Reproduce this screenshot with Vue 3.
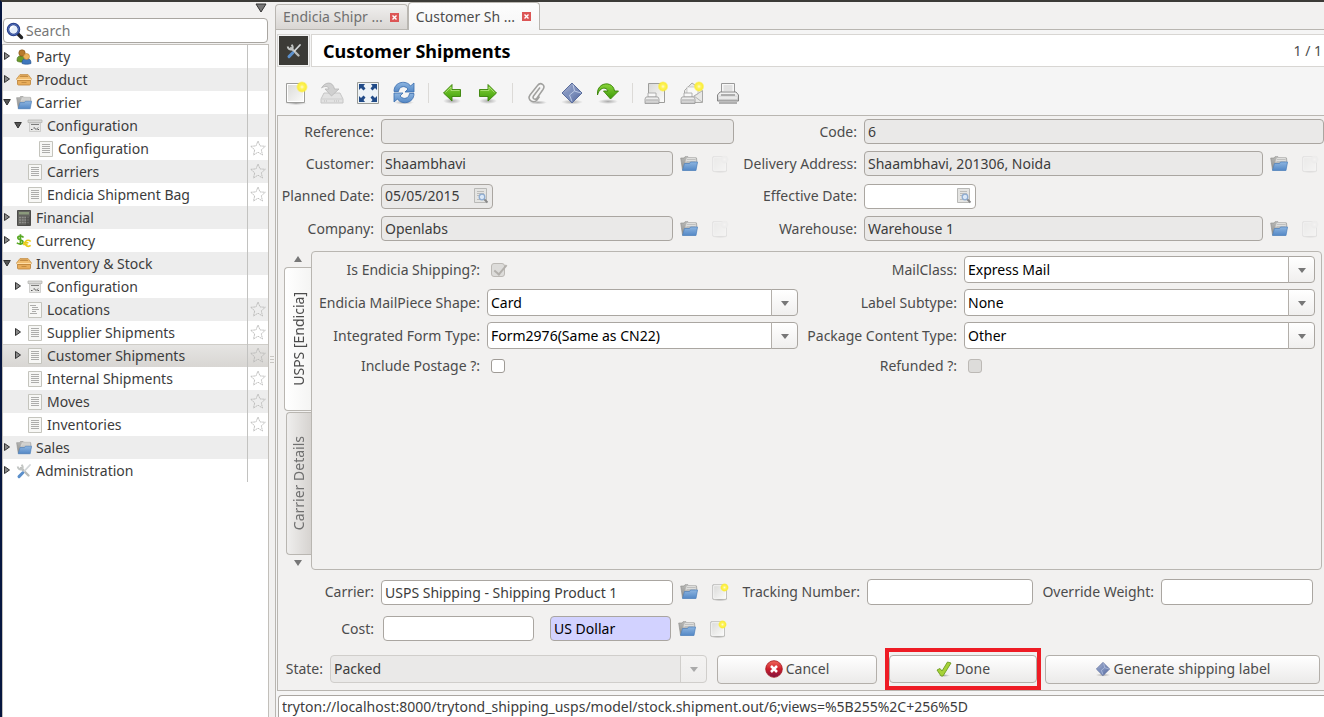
<script setup>
import { ref } from 'vue'

const search = ref('')
const tree = [
  { label: 'Party', icon: 'party', level: 0, state: 'closed' },
  { label: 'Product', icon: 'box', level: 0, state: 'closed' },
  { label: 'Carrier', icon: 'folder', level: 0, state: 'open' },
  { label: 'Configuration', icon: 'config', level: 1, state: 'open' },
  { label: 'Configuration', icon: 'list', level: 2, star: true },
  { label: 'Carriers', icon: 'list', level: 1, star: true },
  { label: 'Endicia Shipment Bag', icon: 'list', level: 1, star: true },
  { label: 'Financial', icon: 'calc', level: 0, state: 'closed' },
  { label: 'Currency', icon: 'currency', level: 0, state: 'closed' },
  { label: 'Inventory & Stock', icon: 'box', level: 0, state: 'open' },
  { label: 'Configuration', icon: 'config', level: 1, state: 'closed' },
  { label: 'Locations', icon: 'treelist', level: 1, star: true },
  { label: 'Supplier Shipments', icon: 'list', level: 1, state: 'closed', star: true },
  { label: 'Customer Shipments', icon: 'list', level: 1, state: 'closed', star: true, selected: true },
  { label: 'Internal Shipments', icon: 'list', level: 1, star: true },
  { label: 'Moves', icon: 'list', level: 1, star: true },
  { label: 'Inventories', icon: 'list', level: 1, star: true },
  { label: 'Sales', icon: 'folder', level: 0, state: 'closed' },
  { label: 'Administration', icon: 'tools', level: 0, state: 'closed' }
]
const tools = [
  [
    { icon: 'new', name: 'New' },
    { icon: 'save', name: 'Save', off: true },
    { icon: 'fullscreen', name: 'Switch view' },
    { icon: 'refresh', name: 'Reload' }
  ],
  [
    { icon: 'prev', name: 'Previous' },
    { icon: 'next', name: 'Next' }
  ],
  [
    { icon: 'clip', name: 'Attachment' },
    { icon: 'gem', name: 'Action' },
    { icon: 'relate', name: 'Relate' }
  ],
  [
    { icon: 'report', name: 'Report' },
    { icon: 'email', name: 'E-mail' },
    { icon: 'print', name: 'Print' }
  ]
]
</script>

<template>
  <div class="window">
    <svg class="defs" aria-hidden="true">
      <defs>
        <linearGradient id="gPaper" x1="0" y1="0" x2="1" y2="1"><stop offset="0" stop-color="#d9d9d7" /><stop offset="1" stop-color="#fcfcfb" /></linearGradient>
        <linearGradient id="gBlue" x1="0" y1="0" x2="0" y2="1"><stop offset="0" stop-color="#8db5e0" /><stop offset="1" stop-color="#5488c6" /></linearGradient>
        <linearGradient id="gSteel" x1="0" y1="0" x2="0" y2="1"><stop offset="0" stop-color="#b9b9b7" /><stop offset="1" stop-color="#8a8a88" /></linearGradient>
        <linearGradient id="gGreen" x1="0" y1="0" x2="0" y2="1"><stop offset="0" stop-color="#8ad53a" /><stop offset="1" stop-color="#3b9a07" /></linearGradient>
        <linearGradient id="gRed" x1="0" y1="0" x2="0" y2="1"><stop offset="0" stop-color="#ef6a5c" /><stop offset=".5" stop-color="#cf1f2b" /><stop offset="1" stop-color="#7e1240" /></linearGradient>
        <linearGradient id="gGem" x1="0" y1="0" x2="1" y2="1"><stop offset="0" stop-color="#a9b4d2" /><stop offset="1" stop-color="#5268a0" /></linearGradient>
        <linearGradient id="gGrey" x1="0" y1="0" x2="0" y2="1"><stop offset="0" stop-color="#fbfbfb" /><stop offset="1" stop-color="#c2c2c2" /></linearGradient>
        <radialGradient id="gGlow"><stop offset="0" stop-color="#fffbd0" /><stop offset=".35" stop-color="#fdf35a" /><stop offset=".7" stop-color="#fbed3a" /><stop offset="1" stop-color="#fbed3a" stop-opacity="0" /></radialGradient>
        <radialGradient id="gShadow"><stop offset="0" stop-color="#000" stop-opacity=".3" /><stop offset="1" stop-color="#000" stop-opacity="0" /></radialGradient>
      </defs>
      <symbol id="i-party" viewBox="0 0 16 16">
        <path d="M1 12c0-4 1-5 4-5 2 0 4 1 4 5-2 1.500-6 1.500-8 0z" fill="#6a9a2a" stroke="#41691a" stroke-width=".6" />
        <circle cx="6" cy="4" r="3.200" fill="#b87a2c" stroke="#7d4e17" stroke-width=".6" />
        <path d="M6 14.500c0-3.500 1-5 4.500-5s4.500 1.500 4.500 5c-2 1-7 1-9 0z" fill="#3f77bd" stroke="#24518c" stroke-width=".6" />
        <circle cx="10.500" cy="7.500" r="3" fill="#edb45e" stroke="#b37825" stroke-width=".6" />
      </symbol>
      <symbol id="i-box" viewBox="0 0 16 16">
        <path d="M4 2.500h8l3.500 4.500-1 1.500h-13L.5 7z" fill="#f0bd70" stroke="#c08a40" stroke-width=".7" />
        <path d="M4.500 3.500h7l1 1.500h-9z" fill="#c48c42" />
        <path d="M1.500 8.500h13v3.500q0 1-1 1h-11q-1 0-1-1z" fill="#e8ad5b" stroke="#bd8236" stroke-width=".8" />
        <path d="M1 7.500h14" stroke="#ffdda4" /><path d="M5.500 10.500h5" stroke="#c48c42" />
      </symbol>
      <symbol id="i-folder" viewBox="0 0 18 16">
        <path d="M.7 2h3.300l1-1.300h3l1 1 7.500.3.500 5-2 7H2.500z" fill="url(#gSteel)" stroke="#8a8a88" stroke-width=".6" />
        <path d="M6.500 1.500h9.500l.5 5H5z" fill="#dededc" stroke="#b5b5b3" stroke-width=".6" /><path d="M7 3.500h8.500M6.500 5.500h9" stroke="#b9b9b7" stroke-width=".8" />
        <path d="M4.500 7.500h5l1-1.500h7l-1.500 8.500H2.500z" fill="url(#gBlue)" stroke="#4f83bf" stroke-width=".7" />
      </symbol>
      <symbol id="i-config" viewBox="0 0 16 16">
        <path d="M2.500 5h11v8.500h-11z" fill="#e8e8e6" stroke="#c0c0be" stroke-width=".7" />
        <path d="M1 2h14v2.500H1z" fill="#dadad8" stroke="#b0b0ae" stroke-width=".7" />
        <path d="M4 6.500h8" stroke="#7d7d7b" /><path d="M4 11.500h1.500M6.500 10h1.500M10.500 11.500H12" stroke="#555" stroke-width="1.200" /><path d="M8 10.500l1.200 1 2-2" fill="none" stroke="#666" />
      </symbol>
      <symbol id="i-list" viewBox="0 0 16 16">
        <path d="M1.500.5h13v15h-13z" fill="#f7f7f5" stroke="#c4c4bd" />
        <path d="M4 3.500h8M4 5.500h8M4 7.500h8M4 9.500h8M4 11.500h8" stroke="#adadab" />
      </symbol>
      <symbol id="i-treelist" viewBox="0 0 16 16">
        <path d="M1.500.5h13v15h-13z" fill="#f7f7f5" stroke="#c4c4bd" />
        <path d="M3 3.500h6M5 5.500h6M5 7.500h7M5 9.500h4M3 11.500h7" stroke="#adadab" />
      </symbol>
      <symbol id="i-calc" viewBox="0 0 16 16">
        <path d="M1.500.5h13v15h-13z" fill="#63635f" stroke="#4c4c4a" />
        <path d="M3 2h10v2.500H3z" fill="#8b9a7c" /><path d="M3 7.500h10M3 10h10M3 12.500h10" stroke="#8f8f8c" stroke-width="1.300" stroke-dasharray="2 .7" /><path d="M10 6.500h4v8.500h-4z" fill="#3c3c3a" opacity=".45" />
      </symbol>
      <symbol id="i-currency" viewBox="0 0 18 16">
        <path d="M8.500 4C7 2 2 2 2 4.500S8 6.500 8 9s-5 3-7 1M5 .5v12" fill="none" stroke="#57a823" stroke-width="1.900" />
        <path d="M16.500 8.500c-3-3-6.500-.5-6.500 2s3.500 5 6.500 2.500M8 10h6M8 12h5" fill="none" stroke="#e8ca19" stroke-width="1.800" />
      </symbol>
      <symbol id="i-tools" viewBox="0 0 16 16">
        <path d="M5 5l7.500 7.500" stroke="#b9bbb9" stroke-width="2.400" stroke-linecap="round" />
        <path d="M1.800 3.500c0 2 2 3.500 4 2.700 1.300-1 1.300-3-.3-4.400" fill="none" stroke="#c3c6c4" stroke-width="2" />
        <path d="M14 2L7 9.500" stroke="#d2d6d8" stroke-width="1.800" stroke-linecap="round" />
        <path d="M6.800 9.800L3 13.600" stroke="#5b8fcb" stroke-width="3" stroke-linecap="round" />
      </symbol>
      <symbol id="i-star" viewBox="0 0 16 16">
        <path d="M8 1l2 4.900 5.300.4-4 3.500 1.200 5.200L8 12.200 3.500 15l1.200-5.200-4-3.500L6 5.900z" fill="none" stroke="#b4b4b2" stroke-width=".8" stroke-dasharray="2 .5" />
      </symbol>
      <symbol id="i-search" viewBox="0 0 18 18">
        <path d="M11 11l4.500 4.500" stroke="#222" stroke-width="3.400" stroke-linecap="round" />
        <circle cx="7.500" cy="7.500" r="5.500" fill="#e6effb" stroke="#233b88" stroke-width="2.500" /><circle cx="7.500" cy="7.500" r="5.300" fill="none" stroke="#617fc4" stroke-width=".8" />
        <path d="M4.500 7.500c0-2 1.500-3 3-3" stroke="#fff" fill="none" stroke-width="1.500" />
      </symbol>
      <symbol id="i-new" viewBox="0 0 24 24">
        <ellipse cx="12" cy="22.500" rx="11" ry="1.500" fill="url(#gShadow)" />
        <path d="M2.500 2.500h18v19h-18z" fill="url(#gPaper)" stroke="#9d9d9b" /><path d="M3.500 3.500h16v17h-16z" fill="none" stroke="#fff" />
        <circle cx="18" cy="6" r="6" fill="url(#gGlow)" />
      </symbol>
      <symbol id="i-save" viewBox="0 0 24 24">
        <path d="M4 12h16l3 6v4H1v-4z" fill="#e2e2e2" stroke="#c6c6c6" /><path d="M2 18h20" stroke="#cecece" /><path d="M14 20h6M4 20h3" stroke="#bdbdbd" stroke-dasharray="1 1" />
        <path d="M1.500 7C5 .5 13 0 14.500 8H19l-7.500 7L5 8h4C8 4.500 4.500 5 1.500 7z" fill="#d0d0d0" stroke="#b6b6b6" stroke-width=".8" />
      </symbol>
      <symbol id="i-fullscreen" viewBox="0 0 24 24">
        <path d="M1.500 1.500h21v21h-21z" fill="#eef3f6" stroke="#9a9c98" />
        <path d="M3 3h6L7.500 5l2 2.500-2 2L5 7 3 9zM21 3h-6l1.500 2-2 2.500 2 2L19 7l2 2zM3 21h6l-1.500-2 2-2.500-2-2L5 17l-2-2zM21 21h-6l1.500-2-2-2.500 2-2L19 17l2-2z" fill="#204a87" />
      </symbol>
      <symbol id="i-refresh" viewBox="0 0 24 24">
        <ellipse cx="12" cy="21.500" rx="10" ry="2" fill="url(#gShadow)" />
        <path d="M2 10.500C2 0 15-1 18.500 5L22 2v9h-9l3-3C12 3.500 7 6 6.500 10.500z" fill="url(#gBlue)" stroke="#386cad" stroke-width=".8" />
        <path d="M22 12.500c0 10.500-13 11.500-16.500 5.500L2 21v-9h9l-3 3c4 4.500 9 2 9.500-2.500z" fill="url(#gBlue)" stroke="#386cad" stroke-width=".8" />
      </symbol>
      <symbol id="i-prev" viewBox="0 0 24 24">
        <ellipse cx="12" cy="20" rx="9" ry="3" fill="url(#gShadow)" />
        <path d="M3.500 12L12 3.500v5h8.500v7H12v4.500z" fill="url(#gGreen)" stroke="#398207" stroke-width=".9" /><path d="M5.500 11.500L11 6v3.500h8.500" fill="none" stroke="#b3e47f" stroke-width=".8" />
      </symbol>
      <symbol id="i-next" viewBox="0 0 24 24">
        <ellipse cx="12" cy="20" rx="9" ry="3" fill="url(#gShadow)" />
        <path d="M20.500 12L12 3.500v5H3.500v7H12v4.500z" fill="url(#gGreen)" stroke="#398207" stroke-width=".9" /><path d="M4.500 9.500H13V6l5.500 5.500" fill="none" stroke="#b3e47f" stroke-width=".8" />
      </symbol>
      <symbol id="i-clip" viewBox="0 0 24 24">
        <ellipse cx="14" cy="21.500" rx="9" ry="2" fill="url(#gShadow)" />
        <path d="M16 6.500L9.500 15c-1.500 2.500 1.500 4.500 3.500 2l6-8.500c3-4.500-2.500-8-5.500-4L6 14c-3.500 5 3.500 9 7 5l2.500-3.500" fill="none" stroke="#a0a09e" stroke-width="1.500" />
      </symbol>
      <symbol id="i-gem" viewBox="0 0 24 24">
        <ellipse cx="12" cy="21" rx="11" ry="2.500" fill="url(#gShadow)" />
        <path d="M12 2l10 10-10 10L2 12z" fill="url(#gGem)" stroke="#5a6d9c" />
        <path d="M12 3l3 6.500 6 2.500-7 2-3.500 6.500L3 12l7-2z" fill="#7b90bd" opacity=".55" /><path d="M13 3.500l1.500 6.500-5 4 2.500 6.500M14.500 10l6.500 2" fill="none" stroke="#c3cfe9" stroke-width=".9" />
      </symbol>
      <symbol id="i-relate" viewBox="0 0 24 24">
        <ellipse cx="12" cy="20.500" rx="10" ry="2.500" fill="url(#gShadow)" />
        <path d="M1.500 14C0 1 17-1 18.500 10H22.500l-8 8-7-8h4.500C10.500 5.500 3.500 6 1.500 14z" fill="url(#gGreen)" stroke="#398207" stroke-width=".9" />
      </symbol>
      <symbol id="i-print" viewBox="0 0 24 24">
        <path d="M5.500 2.500h13V12h-13z" fill="#f7f7f7" stroke="#9a9a9a" /><path d="M7.500 5h9M7.500 7h9M7.500 9h9" stroke="#ccc" />
        <path d="M4 11h16l2.500 3v6h-21v-6z" fill="url(#gGrey)" stroke="#858585" /><path d="M5 14h14M3 22h18" stroke="#999" stroke-width="1.500" /><path d="M3 17h18" stroke="#fff" />
      </symbol>
      <symbol id="i-report" viewBox="0 0 24 24">
        <path d="M4.500 2.500h16v19h-16z" fill="url(#gPaper)" stroke="#9d9d9b" />
        <path d="M4 12h8v4H4z" fill="#f8f8f8" stroke="#a0a0a0" stroke-width=".8" /><path d="M2 16h12l1 2v4.500H1V18z" fill="url(#gGrey)" stroke="#959595" stroke-width=".8" /><path d="M2 19h12" stroke="#aaa" />
        <circle cx="19" cy="5.500" r="5.500" fill="url(#gGlow)" />
      </symbol>
      <symbol id="i-email" viewBox="0 0 24 24">
        <path d="M4.500 9.500L12 2l10.500 7.500v12h-18z" fill="#e8e8e6" stroke="#a9a9a7" /><path d="M7 6h11v7l-6 3-5-3z" fill="#f8f8f7" stroke="#bbb" stroke-width=".7" /><path d="M22 10l-8 5 8 6" fill="none" stroke="#b3b3b3" />
        <path d="M4 12h8v4H4z" fill="#f8f8f8" stroke="#a0a0a0" stroke-width=".8" /><path d="M2 16h12l1 2v4.500H1V18z" fill="url(#gGrey)" stroke="#959595" stroke-width=".8" /><path d="M2 19h12" stroke="#aaa" />
        <circle cx="19" cy="5.500" r="5.500" fill="url(#gGlow)" />
      </symbol>
      <symbol id="i-find" viewBox="0 0 16 16">
        <path d="M1.500.5h12v14h-12z" fill="#e4e4e2" stroke="#b9b9b7" /><path d="M4 3.500h7M4 5.500h7M4 7.500h3M4 11.500h3" stroke="#bcbcba" />
        <path d="M11 11l3.500 3.500" stroke="#888" stroke-width="1.800" /><circle cx="9" cy="9" r="2.800" fill="#dbe8f7" stroke="#8facd0" stroke-width="1.300" />
      </symbol>
      <symbol id="i-cancel" viewBox="0 0 18 18">
        <circle cx="9" cy="9" r="8.300" fill="url(#gRed)" stroke="#a4151d" stroke-width=".8" /><path d="M6 6l6 6M12 6l-6 6" stroke="#fff" stroke-width="2.500" />
      </symbol>
      <symbol id="i-done" viewBox="0 0 16 16">
        <ellipse cx="8" cy="14.500" rx="6" ry="1.500" fill="url(#gShadow)" />
        <path d="M1 9l3-1.500L6 10l5.500-9L15 2 7 15H5z" fill="#a6d238" stroke="#6d9c20" stroke-width=".9" />
      </symbol>
    </svg>

    <aside class="sidebar">
      <button class="collapse" aria-label="Menu"><svg width="12" height="10" viewBox="0 0 12 10"><path d="M1 1h10L6 9z" fill="#777" stroke="#333" /></svg></button>
      <div class="search">
        <svg width="18" height="18"><use href="#i-search" /></svg>
        <input v-model="search" type="text" placeholder="Search" aria-label="Search">
      </div>
      <ul class="tree">
        <li v-for="(n, i) in tree" :key="i" :class="{ selected: n.selected }">
          <button class="node" :class="'level' + n.level">
            <span class="twisty">
              <svg v-if="n.state === 'closed'" width="8" height="10" viewBox="0 0 8 10"><path d="M1.500 1.500v7l5-3.500z" fill="#888" stroke="#333" /></svg>
              <svg v-if="n.state === 'open'" width="8" height="10" viewBox="0 0 8 10"><path d="M.7 2.500h6.600L4 8z" fill="#555" stroke="#333" /></svg>
            </span>
            <svg width="16" height="16"><use :href="'#i-' + n.icon" /></svg>
            <span>{{ n.label }}</span>
          </button>
          <button class="fav" :aria-label="'Favourite ' + n.label">
            <svg v-if="n.star" width="16" height="16"><use href="#i-star" /></svg>
          </button>
        </li>
      </ul>
    </aside>
    <div class="splitter"><i /><i /><i /></div>

    <main class="main">
      <nav class="tabs">
        <div class="tab">
          <button class="tab-name">Endicia Shipr ...</button>
          <button class="close" aria-label="Close Endicia Shipr"><svg width="9" height="9" viewBox="0 0 9 9"><path d="M0 0h9v9H0z" fill="#dc5555" /><path d="M2.500 2.500l4 4M6.500 2.500l-4 4" stroke="#fff" stroke-width="1.400" /></svg></button>
        </div>
        <div class="tab current">
          <button class="tab-name">Customer Sh ...</button>
          <button class="close" aria-label="Close Customer Sh"><svg width="9" height="9" viewBox="0 0 9 9"><path d="M0 0h9v9H0z" fill="#dc5555" /><path d="M2.500 2.500l4 4M6.500 2.500l-4 4" stroke="#fff" stroke-width="1.400" /></svg></button>
        </div>
      </nav>

      <div class="page">
        <header class="heading">
          <button class="tool-menu" aria-label="Tools"><svg width="16" height="16"><use href="#i-tools" /></svg></button>
          <div class="title">
            <h1>Customer Shipments</h1>
            <span>1 / 1</span>
          </div>
        </header>
        <div class="toolbar">
          <div v-for="(group, g) in tools" :key="g" class="group">
            <button v-for="t in group" :key="t.icon" :aria-label="t.name" :disabled="t.off">
              <svg width="24" height="24"><use :href="'#i-' + t.icon" /></svg>
            </button>
          </div>
        </div>

        <form class="form" @submit.prevent>
          <div class="record">
            <label for="reference">Reference:</label>
            <div class="cell"><input id="reference" class="box" type="text" readonly></div>
            <label for="code">Code:</label>
            <div class="cell"><input id="code" class="box" type="text" value="6" readonly></div>

            <label for="customer">Customer:</label>
            <div class="cell">
              <input id="customer" class="box" type="text" value="Shaambhavi" readonly>
              <button class="ico" aria-label="Open customer"><svg width="18" height="16"><use href="#i-folder" /></svg></button>
              <button class="ico faded" aria-label="New customer" disabled><svg width="18" height="18"><use href="#i-new" /></svg></button>
            </div>
            <label for="address">Delivery Address:</label>
            <div class="cell">
              <input id="address" class="box" type="text" value="Shaambhavi, 201306, Noida" readonly>
              <button class="ico" aria-label="Open address"><svg width="18" height="16"><use href="#i-folder" /></svg></button>
              <button class="ico faded" aria-label="New address" disabled><svg width="18" height="18"><use href="#i-new" /></svg></button>
            </div>

            <label for="planned">Planned Date:</label>
            <div class="cell dates">
              <div class="box date off">
                <input id="planned" type="text" value="05/05/2015" readonly>
                <button aria-label="Pick planned date"><svg width="16" height="16"><use href="#i-find" /></svg></button>
              </div>
            </div>
            <label for="effective">Effective Date:</label>
            <div class="cell dates">
              <div class="box date">
                <input id="effective" type="text">
                <button aria-label="Pick effective date"><svg width="16" height="16"><use href="#i-find" /></svg></button>
              </div>
            </div>

            <label for="company">Company:</label>
            <div class="cell">
              <input id="company" class="box" type="text" value="Openlabs" readonly>
              <button class="ico" aria-label="Open company"><svg width="18" height="16"><use href="#i-folder" /></svg></button>
              <button class="ico faded" aria-label="New company" disabled><svg width="18" height="18"><use href="#i-new" /></svg></button>
            </div>
            <label for="warehouse">Warehouse:</label>
            <div class="cell">
              <input id="warehouse" class="box" type="text" value="Warehouse 1" readonly>
              <button class="ico" aria-label="Open warehouse"><svg width="18" height="16"><use href="#i-folder" /></svg></button>
              <button class="ico faded" aria-label="New warehouse" disabled><svg width="18" height="18"><use href="#i-new" /></svg></button>
            </div>
          </div>

          <section class="notebook">
            <div class="side-tabs">
              <button class="arrow" aria-label="Previous tab"><svg width="8" height="6" viewBox="0 0 8 6"><path d="M0 6h8L4 0z" fill="#777" /></svg></button>
              <button class="side-tab active"><span>USPS [Endicia]</span></button>
              <button class="side-tab"><span>Carrier Details</span></button>
              <button class="arrow" aria-label="Next tab"><svg width="8" height="6" viewBox="0 0 8 6"><path d="M0 0h8L4 6z" fill="#777" /></svg></button>
            </div>
            <div class="panel">
              <label for="endicia">Is Endicia Shipping?:</label>
              <div><input id="endicia" type="checkbox" checked disabled></div>
              <label for="mailclass">MailClass:</label>
              <div class="combo"><select id="mailclass"><option>Express Mail</option></select></div>

              <label for="shape">Endicia MailPiece Shape:</label>
              <div class="combo"><select id="shape"><option>Card</option></select></div>
              <label for="subtype">Label Subtype:</label>
              <div class="combo"><select id="subtype"><option>None</option></select></div>

              <label for="formtype">Integrated Form Type:</label>
              <div class="combo"><select id="formtype"><option>Form2976(Same as CN22)</option></select></div>
              <label for="content">Package Content Type:</label>
              <div class="combo"><select id="content"><option>Other</option></select></div>

              <label for="postage">Include Postage ?:</label>
              <div><input id="postage" type="checkbox"></div>
              <label for="refunded">Refunded ?:</label>
              <div><input id="refunded" type="checkbox" disabled></div>
            </div>
          </section>

          <div class="shipping">
            <label for="carrier">Carrier:</label>
            <div class="cell">
              <input id="carrier" class="box" type="text" value="USPS Shipping - Shipping Product 1">
              <button class="ico" aria-label="Open carrier"><svg width="18" height="16"><use href="#i-folder" /></svg></button>
              <button class="ico" aria-label="New carrier"><svg width="18" height="18"><use href="#i-new" /></svg></button>
            </div>
            <label for="tracking">Tracking Number:</label>
            <input id="tracking" class="box" type="text">
            <label for="weight">Override Weight:</label>
            <input id="weight" class="box" type="text">

            <label for="cost">Cost:</label>
            <div class="cell cost">
              <input id="cost" class="box" type="text">
              <input class="box currency" type="text" value="US Dollar" aria-label="Currency">
              <button class="ico" aria-label="Open currency"><svg width="18" height="16"><use href="#i-folder" /></svg></button>
              <button class="ico" aria-label="New currency"><svg width="18" height="18"><use href="#i-new" /></svg></button>
            </div>
          </div>

          <div class="actions">
            <label for="state">State:</label>
            <div class="combo off"><select id="state" disabled><option>Packed</option></select></div>
            <button class="btn"><svg width="18" height="18"><use href="#i-cancel" /></svg>Cancel</button>
            <div class="highlight"><button class="btn"><svg width="16" height="16"><use href="#i-done" /></svg>Done</button></div>
            <button class="btn"><svg width="16" height="16"><use href="#i-gem" /></svg>Generate shipping label</button>
          </div>
        </form>
        <input class="url" type="text" aria-label="Address" value="tryton://localhost:8000/trytond_shipping_usps/model/stock.shipment.out/6;views=%5B255%2C+256%5D">
      </div>
    </main>
  </div>
</template>

<style>
html, body { margin: 0; background: #f2f1f0; }
</style>

<style scoped>
.window, .window * { box-sizing: border-box; }
.window {
  display: flex;
  height: 100vh;
  overflow: hidden;
  border-top: 2px solid #3c3b37;
  border-left: 2px solid #06163f;
  background: #f2f1f0;
  color: #4c4c4c;
  font: 14px/20px "Noto Sans", "Open Sans", sans-serif;
}
.defs { position: absolute; width: 0; height: 0; }
button { margin: 0; padding: 0; border: 0; background: none; font: inherit; color: inherit; display: flex; align-items: center; }
input, select { font: inherit; color: #3c3c3c; min-width: 0; outline: 0; }
label { text-align: right; white-space: nowrap; }
svg { flex: none; display: block; }

.sidebar { flex: none; width: 267px; display: flex; flex-direction: column; }
.collapse { align-self: flex-end; height: 16px; padding: 0 2px 4px 0; }
.search { display: flex; align-items: center; height: 25px; margin: 0 1px 0 1px; padding-left: 2px; border: 1px solid #a9a6a1; border-radius: 4px; background: #fff; }
.search input { flex: 1; padding: 0 2px; border: 0; background: none; }
.search input::placeholder { color: #777; opacity: 1; }
.tree { flex: 1; margin: 1px 0 0; padding: 0; list-style: none; background: #fff; border: 1px solid #c2bfba; border-bottom: 0; color: #3c3c3c; }
.tree li { display: flex; height: 23px; }
.tree li:nth-child(even) { background: #ededed; }
.tree li.selected { background: linear-gradient(#e6e5e3, #d8d6d3); box-shadow: inset 0 1px #cfcdc8; }
.node { flex: 1; gap: 4px; white-space: nowrap; }
.node.level1 { padding-left: 11px; }
.node.level2 { padding-left: 22px; }
.twisty { width: 9px; margin-bottom: 2px; }
.fav { width: 21px; justify-content: center; padding-bottom: 2px; border-left: 1px solid #c2c2c0; }
.splitter { flex: none; width: 6px; display: flex; flex-direction: column; align-items: center; justify-content: center; gap: 2px; }
.splitter i { width: 4px; height: 1px; background: #c8c6c2; }

.main { flex: 1; min-width: 0; display: flex; flex-direction: column; }
.tabs { display: flex; align-items: flex-end; height: 28px; flex: none; border-bottom: 1px solid #b9b6b1; }
.tab { display: flex; align-items: center; gap: 7px; height: 25px; padding: 0 8px 0 7px; border: 1px solid #b9b6b1; border-bottom: 0; border-radius: 4px 4px 0 0; background: linear-gradient(#f0efee, #d9d6d3); color: #707070; white-space: nowrap; }
.tab.current { height: 28px; margin-bottom: -1px; background: linear-gradient(#fdfdfd, #f6f6f6); color: #4c4c4c; }
.page { flex: 1; min-height: 0; display: flex; flex-direction: column; border-left: 1px solid #b9b6b1; background: #f5f5f5; padding-left: 1px; }
.heading { display: flex; gap: 1px; height: 33px; flex: none; margin-top: 4px; }
.tool-menu { width: 33px; justify-content: center; background: #3c3b37; border: 1px solid #d8d6d3; box-shadow: inset 0 0 0 1px #f5f5f5; }
.title { flex: 1; display: flex; align-items: center; justify-content: space-between; padding: 0 2px 0 11px; background: #fff; border: 1px solid #d8d6d3; border-right: 0; }
h1 { margin: 0; color: #000; font-size: 18px; line-height: 24px; font-weight: 700; }
.toolbar { display: flex; flex: none; height: 48px; align-items: center; padding: 4px 0 0 7px; }
.group { display: flex; gap: 12px; }
.group + .group { margin-left: 12px; padding-left: 12px; position: relative; }
.group + .group::before { content: ""; position: absolute; left: 0; top: 2px; height: 20px; border-left: 1px solid #dcdad7; }

.form { flex: 1; min-height: 0; display: flex; flex-direction: column; border: 1px solid #b9b6b1; border-right: 0; background: #f2f1f0; }
.record { display: grid; grid-template-columns: 96px minmax(0, 353fr) 116px minmax(0, 460fr); column-gap: 7px; row-gap: 7px; align-items: center; padding-top: 3px; }
.cell { display: flex; align-items: center; gap: 7px; min-width: 0; }
.box { height: 26px; padding: 0 3px; border: 1px solid #aaa6a1; border-radius: 4px; background: #fff; }
.cell .box { flex: 1; height: 25px; }
.box:read-only:not(.date), .box.off { background: #eae9e8; }
.ico { width: 18px; justify-content: center; }
.ico + .ico { margin: 0 5px 0 6px; }
.faded { opacity: .3; filter: grayscale(1); }
.cell.dates { height: 26px; }
.cell .date { flex: none; width: 112px; display: flex; align-items: center; }
.date input { flex: 1; padding: 0; border: 0; background: none; }

.notebook { flex: 1; min-height: 0; display: flex; margin: 10px 2px 0 6px; }
.side-tabs { width: 27px; display: flex; flex-direction: column; align-items: flex-end; }
.arrow { width: 27px; height: 15px; justify-content: center; }
.side-tab { flex: 1; width: 25px; margin-top: 1px; justify-content: center; border: 1px solid #b9b6b1; border-right: 0; border-radius: 4px 0 0 4px; background: linear-gradient(90deg, #efeeed, #d6d3d0); color: #707070; }
.side-tab.active { width: 28px; margin-right: -1px; background: linear-gradient(90deg, #fff, #f4f4f3); color: #4c4c4c; }
.side-tab span { writing-mode: vertical-rl; transform: rotate(180deg); white-space: nowrap; }
.panel { flex: 1; display: grid; grid-template-columns: 168px minmax(0, 311fr) 152px minmax(0, 351fr); grid-template-rows: 27px 27px 27px 22px; column-gap: 7px; row-gap: 6px; align-items: center; padding: 4px 6px 0 0; border: 1px solid #b9b6b1; border-radius: 4px; }
input[type="checkbox"] { appearance: none; display: block; width: 14px; height: 14px; margin: 0 4px; border: 1px solid #9f9b96; border-radius: 3px; background: #fff; position: relative; }
input[type="checkbox"]:disabled { background: #dddcda; border-color: #bcb9b5; }
input[type="checkbox"]:checked::before { content: ""; position: absolute; left: 5px; top: -2px; width: 5px; height: 11px; border: solid #b3b0ac; border-width: 0 2px 2px 0; transform: rotate(40deg); }
.combo { position: relative; height: 27px; }
.combo select { appearance: none; display: block; width: 100%; height: 100%; padding: 0 30px 0 3px; border: 1px solid #aaa6a1; border-radius: 4px; background: linear-gradient(#fff, #f0efee) right / 26px 100% no-repeat #fff; color: #000; opacity: 1; }
.combo::before { content: ""; position: absolute; right: 26px; top: 0; height: 100%; border-left: 1px solid #b3afaa; }
.combo::after { content: ""; position: absolute; right: 9px; top: 12px; border: 4px solid transparent; border-top: 5px solid #777; border-bottom: 0; }
.combo.off select { color: #3c3c3c; border-color: #d0cecb; background: linear-gradient(#f4f3f2, #eeedec) right / 26px 100% no-repeat #eae9e8; }
.combo.off::before { border-color: #d0cecb; }
.combo.off::after { border-top-color: #aaa; }

.shipping { display: grid; grid-template-columns: 96px minmax(0, 353fr) 119px minmax(0, 166fr) 114px minmax(0, 152fr); column-gap: 7px; row-gap: 11px; align-items: center; margin-top: 9px; padding-right: 11px; }
.cost { padding-left: 2px; }
.cost #cost { flex: 152; }
.cost .currency { flex: 120; margin-left: 9px; background: #d2d2ff; color: #000; }
.cost .ico:last-child { margin-right: 7px; }
.actions { display: grid; grid-template-columns: 45px minmax(0, 394fr) minmax(0, 160fr) minmax(0, 168fr) minmax(0, 275fr); align-items: center; margin: 7px 4px 0 0; }
.actions .combo { margin: 0 10px 0 7px; height: 28px; }
.btn { height: 29px; width: 100%; justify-content: center; gap: 3px; border: 1px solid #b3afaa; border-radius: 4px; background: linear-gradient(#fff, #ebeae9); white-space: nowrap; }
.highlight { border: 4px solid #ee1c25; padding: 3px 0; height: 42px; margin: 0 4px 0 8px; }
.highlight .btn { height: 28px; }
.url { flex: none; height: 22px; margin: 4px 0 0 1px; padding: 0 3px; border: 1px solid #aaa6a1; border-width: 1px 0 0 1px; border-radius: 4px 0 0 0; background: #fff; }
</style>
